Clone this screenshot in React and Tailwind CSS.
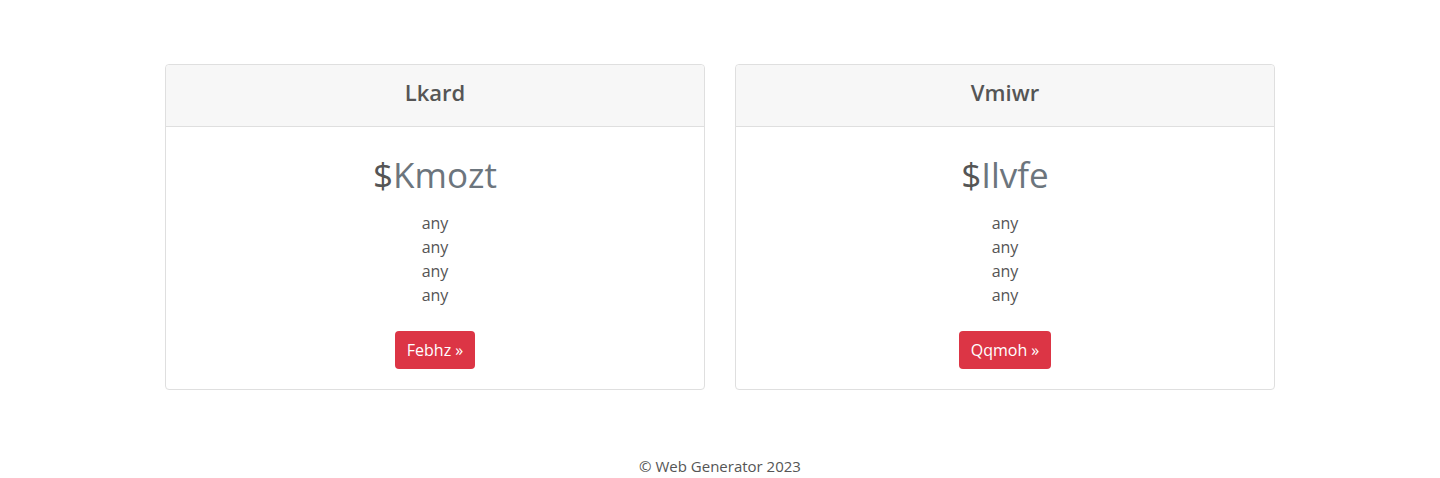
const plans = [
  { name: 'Lkard', price: 'Kmozt', button: 'Febhz' },
  { name: 'Vmiwr', price: 'Ilvfe', button: 'Qqmoh' },
];

const PlanCard = ({ plan }) => {
  return (
    <div className="flex-1 border border-[#dfdfdf] rounded bg-white text-center">
      <div className="bg-[#f7f7f7] border-b border-[#dfdfdf] pt-[13px] pb-[19px] rounded-t">
        <h4 className="text-[22px] leading-[29px] font-semibold text-[#555]">{plan.name}</h4>
      </div>
      <div className="pt-6 pb-5 px-5">
        <h1 className="text-[35px] leading-[48px] font-normal text-[#555]">
          $<span className="text-[#6c757d]">{plan.price}</span>
        </h1>
        <ul className="mt-3 mb-6 text-[16px] leading-6 text-[#555]">
          <li>any</li>
          <li>any</li>
          <li>any</li>
          <li>any</li>
        </ul>
        <button className="bg-[#dc3545] text-white text-[16px] leading-6 px-3 py-[7px] rounded">
          {plan.button} &raquo;
        </button>
      </div>
    </div>
  );
};

export default function App() {
  return (
    <div className="bg-white min-h-[478px] font-['Open_Sans',sans-serif] text-[#555]">
      <div className="w-[1110px] mx-auto pt-16 flex gap-[30px]">
        {plans.map((p) => (
          <PlanCard key={p.name} plan={p} />
        ))}
      </div>
      <footer className="mt-16 text-center text-[15px] leading-6 text-[#555]">
        &copy; Web Generator 2023
      </footer>
    </div>
  );
}
